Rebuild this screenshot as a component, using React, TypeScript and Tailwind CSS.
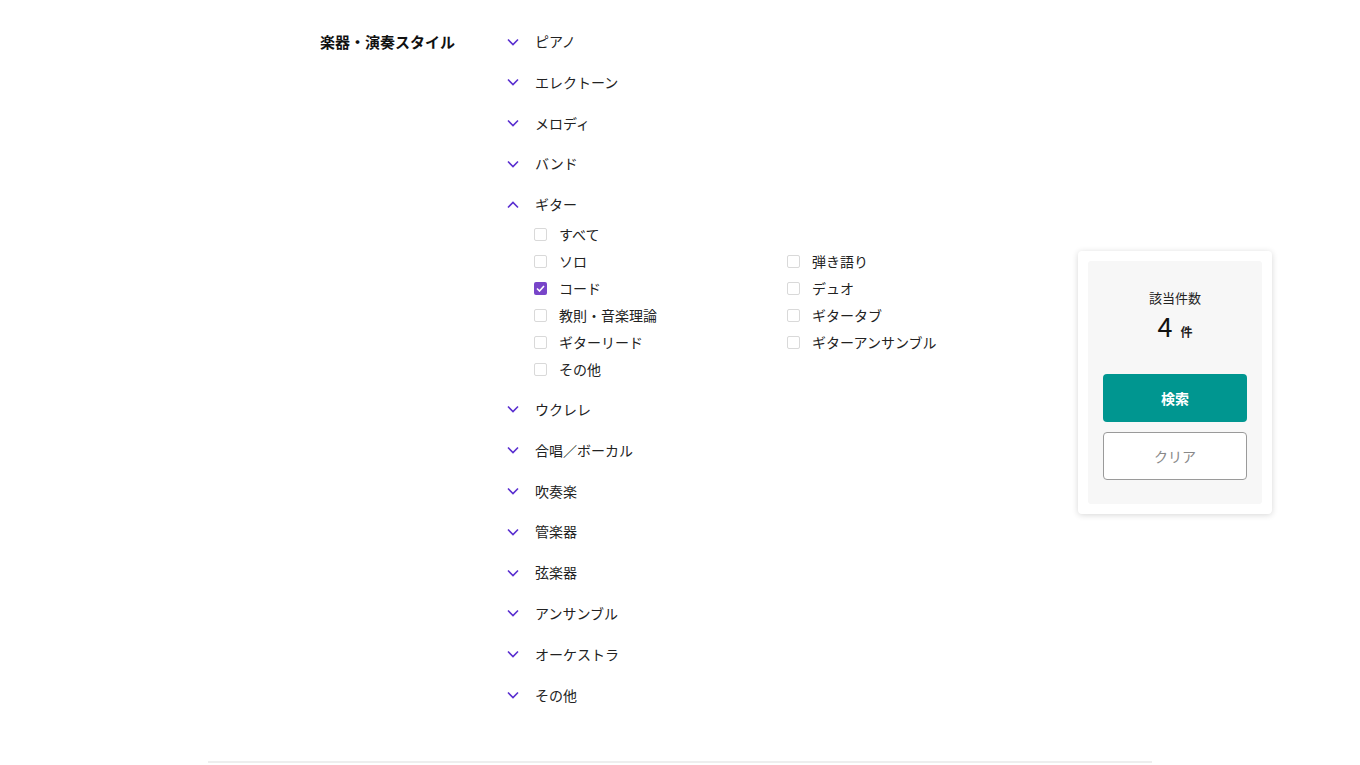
import { useState } from 'react';

const categories = [
  'ピアノ',
  'エレクトーン',
  'メロディ',
  'バンド',
  'ギター',
  'ウクレレ',
  '合唱／ボーカル',
  '吹奏楽',
  '管楽器',
  '弦楽器',
  'アンサンブル',
  'オーケストラ',
  'その他',
];

const guitarOptions = [
  'ソロ',
  '弾き語り',
  'コード',
  'デュオ',
  '教則・音楽理論',
  'ギタータブ',
  'ギターリード',
  'ギターアンサンブル',
  'その他',
];

function Chevron({ up }: { up?: boolean }) {
  return (
    <svg
      width="12"
      height="8"
      viewBox="0 0 12 8"
      fill="none"
      stroke="#5a2fd0"
      strokeWidth="1.6"
      className={up ? 'rotate-180' : ''}
    >
      <path d="M1 1.5 L6 6.5 L11 1.5" />
    </svg>
  );
}

function Check({ label, checked, onToggle }: { label: string; checked: boolean; onToggle: () => void }) {
  return (
    <label className="flex h-[27px] items-center gap-3 cursor-pointer" onClick={onToggle}>
      <span
        className={
          checked
            ? 'flex h-[13px] w-[13px] items-center justify-center rounded-[2px] bg-[#7845c9]'
            : 'h-[13px] w-[13px] rounded-[2px] border border-[#d9d9d9] bg-white'
        }
      >
        {checked && (
          <svg width="9" height="7" viewBox="0 0 9 7" fill="none" stroke="white" strokeWidth="1.6">
            <path d="M1 3.5 L3.5 6 L8 1" />
          </svg>
        )}
      </span>
      <span className="text-[14px] leading-[21px] text-[#222]">{label}</span>
    </label>
  );
}

export default function App() {
  const [open, setOpen] = useState<string>('ギター');
  const [checked, setChecked] = useState<string[]>(['コード']);

  const toggle = (k: string) =>
    setChecked((c) => (c.includes(k) ? c.filter((x) => x !== k) : [...c, k]));

  return (
    <div className="min-h-screen bg-white font-['Noto_Sans_CJK_JP','Noto_Sans',sans-serif] text-[#222]">
      <div className="flex pt-[31px]">
        <div className="w-[187px] shrink-0 ml-[320px]">
          <h2 className="text-[15px] font-bold leading-[21px] text-[#111]">楽器・演奏スタイル</h2>
        </div>

        <div className="flex flex-1 flex-col gap-[19.8px]">
          {categories.map((cat) => {
            const isOpen = open === cat;
            return (
              <div key={cat} className={isOpen ? 'mb-[-4px]' : ''}>
                <button
                  className="flex h-[21px] items-center gap-4 text-[14px] leading-[21px]"
                  onClick={() => setOpen(isOpen ? '' : cat)}
                >
                  <Chevron up={isOpen} />
                  <span>{cat}</span>
                </button>
                {isOpen && (
                  <div className="mt-[6px] pl-[27px]">
                    <Check label="すべて" checked={checked.includes('all')} onToggle={() => toggle('all')} />
                    <div className="grid grid-cols-[253px_253px]">
                      {guitarOptions.map((o) => (
                        <Check key={o} label={o} checked={checked.includes(o)} onToggle={() => toggle(o)} />
                      ))}
                    </div>
                  </div>
                )}
              </div>
            );
          })}
        </div>

        <aside className="mr-[88px] mt-[220px] h-fit w-[194px] shrink-0 rounded-[4px] bg-white p-[10px] shadow-[0_1px_6px_rgba(0,0,0,0.16)]">
          <div className="flex flex-col items-center rounded-[3px] bg-[#f7f7f7] px-[15px] pt-[27px] pb-[24px]">
            <p className="text-[13px] leading-[19px] text-[#222]">該当件数</p>
            <p className="mt-[1px] flex items-baseline gap-[8px]">
              <span className="text-[27px] leading-[36px] text-[#111]">4</span>
              <span className="text-[12px] font-bold">件</span>
            </p>
            <button className="mt-[30px] h-[48px] w-full rounded-[4px] bg-[#009690] text-[14px] font-bold text-white">
              検索
            </button>
            <button className="mt-[10px] h-[48px] w-full rounded-[4px] border border-[#9a9a9a] bg-white text-[14px] text-[#888]">
              クリア
            </button>
          </div>
        </aside>
      </div>

      <div className="mx-auto mt-[55px] h-[2px] w-[944px] bg-[#eeeeee]" />
    </div>
  );
}
